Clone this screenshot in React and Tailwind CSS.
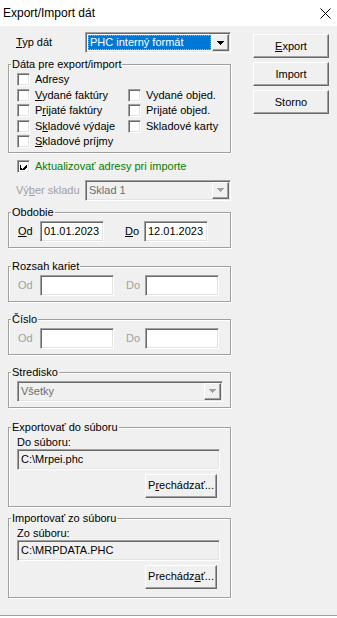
import { useState } from "react";

const sunken =
  "border border-t-[#a0a0a0] border-l-[#a0a0a0] border-b-white border-r-white shadow-[inset_1px_1px_0_#696969,inset_-1px_-1px_0_#e3e3e3]";
const raised =
  "border border-t-white border-l-white border-b-[#696969] border-r-[#696969] shadow-[inset_-1px_-1px_0_#a0a0a0]";

const Check = ({ checked }) => (
  <span className={`w-[13px] h-[13px] bg-white ${sunken} flex items-center justify-center shrink-0`}>
    {checked && (
      <svg width="7" height="7" viewBox="0 0 7 7" shapeRendering="crispEdges">
        <path d="M0 2h1v3h1v1h1v-1h1v-1h1v-1h1v-1h1v3h-1v1h-1v1h-1v1h-1v1h-1v-1h-1v-1h-1z" fill="#000" />
      </svg>
    )}
  </span>
);

const CheckRow = ({ children, checked, className = "" }) => (
  <label className={`flex items-center gap-[5px] h-[15.5px] ${className}`}>
    <Check checked={checked} />
    <span>{children}</span>
  </label>
);

const Arrow = ({ disabled }) => (
  <span className={`w-[17px] h-full bg-[#f0f0f0] ${raised} flex items-center justify-center shrink-0`}>
    <svg width="7" height="4" viewBox="0 0 7 4" shapeRendering="crispEdges">
      <path d="M0 0h7l-3.5 4z" fill={disabled ? "#a0a0a0" : "#000"} />
    </svg>
  </span>
);

const Combo = ({ className = "", text, selected, disabled }) => (
  <div className={`h-[21px] ${sunken} ${disabled ? "bg-[#f0f0f0]" : "bg-white"} flex p-[1px] ${className}`}>
    {selected ? (
      <div className="flex-1 m-[1px] mr-[1px] bg-[#0078d7] border border-dotted border-[#e8a040] text-white flex items-center pl-[1px]">
        {text}
      </div>
    ) : (
      <div className={`flex-1 flex items-center pl-[2px] ${disabled ? "text-[#6d6d6d]" : ""}`}>{text}</div>
    )}
    <Arrow disabled={disabled} />
  </div>
);

const Field = ({ className = "", value = "", gray }) => (
  <div className={`h-[21px] ${sunken} ${gray ? "bg-[#f0f0f0]" : "bg-white"} flex items-center pl-[3px] ${className}`}>
    {value}
  </div>
);

const Button = ({ children, className = "" }) => (
  <button className={`h-[24px] bg-[#f0f0f0] ${raised} flex items-center justify-center ${className}`}>
    {children}
  </button>
);

const Group = ({ title, children, className = "" }) => (
  <fieldset className={`border border-[#a0a0a0] shadow-[1px_1px_0_#fff,inset_1px_1px_0_#fff] ${className}`}>
    <legend className="ml-[2px] px-[1px] leading-[13px] bg-[#f0f0f0]">{title}</legend>
    {children}
  </fieldset>
);

const RangeRow = ({ wide, disabled, from = "", to = "" }) => (
  <div className={`flex items-center pt-[2px] pb-[5px] pl-[8px] ${disabled ? "text-[#a0a0a0]" : ""}`}>
    <span className="w-[23px] pl-[1px]">
      {disabled ? "Od" : <><u>O</u>d</>}
    </span>
    <Field className={wide ? "w-[74px]" : "w-[64px]"} value={from} />
    <span className={`w-[19px] ${wide ? "ml-[12px]" : "ml-[21px]"}`}>
      {disabled ? "Do" : <><u>D</u>o</>}
    </span>
    <Field className={wide ? "w-[74px]" : "w-[64px]"} value={to} />
  </div>
);

export default function App() {
  const [aktualizovat] = useState(true);

  return (
    <div className="w-[337px] h-[618px] bg-white font-['Liberation_Sans',Arial,sans-serif] text-[11px] leading-[13px] text-black overflow-hidden">
      {/* title bar */}
      <div className="h-[26px] flex items-center justify-between pl-[3px] pr-[6px]">
        <span className="text-[12px]">Export/Import dát</span>
        <svg width="11" height="11" viewBox="0 0 11 11">
          <path d="M0.5 0.5L10.5 10.5M10.5 0.5L0.5 10.5" stroke="#000" strokeWidth="1" />
        </svg>
      </div>

      <div className="h-[590px] bg-[#f0f0f0] border-b border-[#a0a0a0] flex pl-[8px]">
        {/* left column */}
        <div className="w-[223px] pt-[6px] flex flex-col">
          <div className="flex items-center">
            <span className="w-[77px] pl-[8px]">
              <u>T</u>yp dát
            </span>
            <Combo className="w-[146px]" text="PHC interný formát" selected />
          </div>

          <Group title="Dáta pre export/import" className="mt-[5px]">
            <div className="flex pl-[8px] pt-[1px] pb-[2px]">
              <div className="w-[111px]">
                <CheckRow>Adresy</CheckRow>
                <CheckRow>
                  <u>V</u>ydané faktúry
                </CheckRow>
                <CheckRow>
                  P<u>r</u>ijaté faktúry
                </CheckRow>
                <CheckRow>
                  S<u>k</u>ladové výdaje
                </CheckRow>
                <CheckRow>
                  <u>S</u>kladové príjmy
                </CheckRow>
              </div>
              <div className="pt-[15.5px]">
                <CheckRow>Vydané objed.</CheckRow>
                <CheckRow>Prijaté objed.</CheckRow>
                <CheckRow>Skladové karty</CheckRow>
              </div>
            </div>
          </Group>

          <CheckRow checked={aktualizovat} className="mt-[6px] pl-[9px] h-[15px] text-[#008000]">
            Aktualizovať adresy pri importe
          </CheckRow>

          <div className="flex items-center mt-[6px]">
            <span className="w-[77px] pl-[8px] text-[#a0a0a0]">
              Vý<u>b</u>er skladu
            </span>
            <Combo className="w-[146px]" text="Sklad 1" disabled />
          </div>

          <Group title="Obdobie" className="mt-[5px]">
            <RangeRow from="01.01.2023" to="12.01.2023" />
          </Group>

          <Group title="Rozsah kariet" className="mt-[12px]">
            <RangeRow wide disabled />
          </Group>

          <Group title="Číslo" className="mt-[11px]">
            <RangeRow wide disabled />
          </Group>

          <Group title="Stredisko" className="mt-[11px]">
            <div className="pl-[8px] pt-[2px] pb-[5px]">
              <Combo className="w-[206px]" text="Všetky" disabled />
            </div>
          </Group>

          <Group title="Exportovať do súboru" className="mt-[13px]">
            <div className="pl-[8px] pt-[2px] pb-[8px]">
              <div className="h-[13px]">Do súboru:</div>
              <Field className="w-[203px]" value="C:\Mrpei.phc" gray />
              <Button className="w-[72px] ml-[128px] mt-[4px]">
                P<u>r</u>echádzať...
              </Button>
            </div>
          </Group>

          <Group title="Importovať zo súboru" className="mt-[5px]">
            <div className="pl-[8px] pt-[2px] pb-[8px]">
              <div className="h-[13px]">Zo súboru:</div>
              <Field className="w-[203px]" value="C:\MRPDATA.PHC" gray />
              <Button className="w-[72px] ml-[128px] mt-[4px]">
                Prechádz<u>a</u>ť...
              </Button>
            </div>
          </Group>
        </div>

        {/* right column */}
        <div className="ml-[22px] pt-[8px] flex flex-col gap-[4px]">
          <Button className="w-[76px]">
            <u>E</u>xport
          </Button>
          <Button className="w-[76px]">Import</Button>
          <Button className="w-[76px]">Storno</Button>
        </div>
      </div>
    </div>
  );
}
